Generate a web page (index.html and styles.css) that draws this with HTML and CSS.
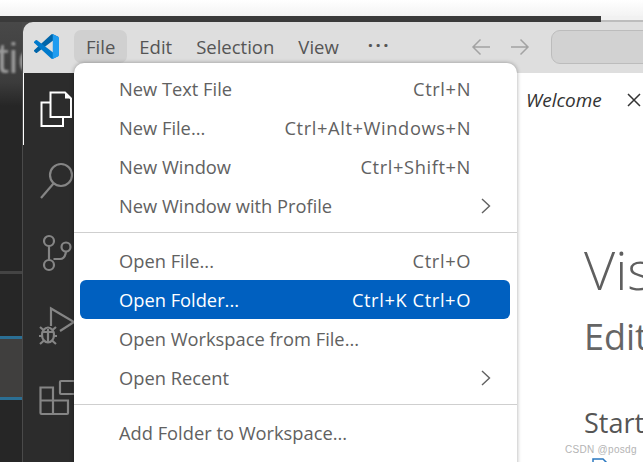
FILE: index.html
```
<!DOCTYPE html>
<html lang="en">
<head>
<meta charset="utf-8">
<title>File menu</title>
<link rel="stylesheet" href="styles.css">
</head>
<body>
<div class="desktop">
  <div class="top-glow"></div>
  <div class="top-bar"></div>
  <div class="stage">
    <div class="backdrop">
      <span class="backdrop-text">tic</span>
      <div class="backdrop-line"></div>
      <div class="backdrop-glow"></div>
    </div>
    <div class="window">
      <header class="titlebar">
        <svg class="logo" viewBox="0 0 100 100" width="25" height="25" aria-hidden="true">
          <path fill="#0065a9" d="M96.460 10.800 75.860.870a6.230 6.230 0 0 0-7.100 1.200L1.300 63.600a4.170 4.170 0 0 0 0 6.160l5.510 5.010a4.170 4.170 0 0 0 5.320.24L93.340 13.400c2.720-2.070 6.630-.13 6.630 3.290v-.24a6.250 6.250 0 0 0-3.510-5.650z"/>
          <path fill="#007acc" d="M96.460 89.200 75.860 99.130a6.230 6.230 0 0 1-7.100-1.200L1.300 36.400a4.170 4.170 0 0 1 0-6.160l5.510-5.010a4.170 4.170 0 0 1 5.320-.24l81.210 61.610c2.720 2.070 6.630.13 6.630-3.290v.24a6.250 6.250 0 0 1-3.510 5.650z"/>
          <path fill="#1f9cf0" d="M75.860 99.140a6.230 6.230 0 0 1-7.100-1.210c2.310 2.310 6.250.67 6.250-2.580V4.650c0-3.260-3.940-4.890-6.250-2.580a6.230 6.230 0 0 1 7.100-1.210l20.600 9.900A6.250 6.250 0 0 1 100 16.390v67.220a6.250 6.250 0 0 1-3.540 5.630z"/>
        </svg>
        <nav class="menubar">
          <span class="menubar-item is-open">File</span>
          <span class="menubar-item">Edit</span>
          <span class="menubar-item">Selection</span>
          <span class="menubar-item">View</span>
          <span class="menubar-item menubar-more">···</span>
        </nav>
        <svg class="nav-arrow" viewBox="0 0 20 20" width="20" height="20" aria-hidden="true"><path d="M19 10H2M9.500 2.500 2 10l7.500 7.500"/></svg>
        <svg class="nav-arrow" viewBox="0 0 20 20" width="20" height="20" aria-hidden="true"><path d="M1 10h17M10.500 2.500 18 10l-7.500 7.500"/></svg>
        <div class="search"></div>
      </header>
      <div class="workbench">
        <aside class="activity">
          <svg class="act" viewBox="0 0 36 36" width="36" height="36" aria-hidden="true">
            <path class="files-line" d="M11 11.500H2.500V35H24v-9"/>
            <path class="files-line" d="M11.500 1.500H26l6 6v18.500H11.500z"/>
            <path class="files-fold" d="M26 2l5.500 5.500H26z"/>
          </svg>
          <svg class="act" viewBox="0 0 36 36" width="36" height="36" aria-hidden="true">
            <circle class="act-line" cx="22" cy="12" r="11"/><path class="act-line" d="M14.500 20.500 2 35"/>
          </svg>
          <svg class="act" viewBox="0 0 36 36" width="36" height="36" aria-hidden="true">
            <circle class="act-line" cx="10" cy="6" r="5"/><circle class="act-line" cx="10" cy="30" r="5"/><circle class="act-line" cx="27" cy="12" r="4.500"/><path class="act-line" d="M10 11v14M14.500 24H21q5 0 6-7.500"/>
          </svg>
          <svg class="act" viewBox="0 0 36 37" width="36" height="37" aria-hidden="true">
            <path class="act-line" d="M12 19V1.500L35 15l-14 9"/>
            <ellipse class="act-line" cx="9" cy="28" rx="6" ry="7.500"/>
            <path class="act-line" d="M3 25h12M9 22v14M1 20l4 3.500M17 20l-4 3.500M0 29h3M15 29h3M1 37l4-3.500M17 37l-4-3.500"/>
          </svg>
          <svg class="act" viewBox="0 0 36 36" width="36" height="36" aria-hidden="true">
            <path class="act-line" d="M1.500 7.500H14V34H2.500q-1 0-1-1zM1.500 20.500H29V33q0 1-1 1H14"/>
            <rect class="act-line" x="21" y="1" width="15" height="13" rx="1"/>
          </svg>
        </aside>
        <main class="editor">
          <div class="tab"><em>Welcome</em><svg class="tab-close" viewBox="0 0 14 14" width="14" height="14" aria-hidden="true"><path d="M1 1l12 12M13 1 1 13"/></svg></div>
          <div class="welcome">
            <h1 class="title">Visual Studio Code</h1>
            <p class="subtitle">Editing evolved</p>
            <h2 class="start">Start</h2>
            <svg class="start-icon" viewBox="0 0 16 16" width="16" height="16" aria-hidden="true"><path d="M1 15V1h10l4 4v10"/></svg>
          </div>
        </main>
      </div>
    </div>
  </div>
  <div class="menu">
    <div class="row"><span>New Text File</span><kbd>Ctrl+N</kbd></div>
    <div class="row"><span>New File...</span><kbd>Ctrl+Alt+Windows+N</kbd></div>
    <div class="row"><span>New Window</span><kbd>Ctrl+Shift+N</kbd></div>
    <div class="row"><span>New Window with Profile</span><svg class="chev" viewBox="0 0 10 16" width="10" height="16" aria-hidden="true"><path d="M1 1l7.500 7L1 15"/></svg></div>
    <hr class="sep">
    <div class="row"><span>Open File...</span><kbd>Ctrl+O</kbd></div>
    <div class="row is-active"><span>Open Folder...</span><kbd>Ctrl+K Ctrl+O</kbd></div>
    <div class="row"><span>Open Workspace from File...</span></div>
    <div class="row"><span>Open Recent</span><svg class="chev" viewBox="0 0 10 16" width="10" height="16" aria-hidden="true"><path d="M1 1l7.500 7L1 15"/></svg></div>
    <hr class="sep">
    <div class="row"><span>Add Folder to Workspace...</span></div>
  </div>
  <span class="watermark">CSDN @posdg</span>
</div>
</body>
</html>
```
FILE: styles.css
```
* { box-sizing: border-box; }
html, body { margin: 0; height: 100%; }
body {
  font-family: "Open Sans", "Noto Sans", "Liberation Sans", sans-serif;
  background: #fff;
  overflow: hidden;
}
.desktop {
  position: relative;
  width: 643px;
  height: 462px;
  overflow: hidden;
  display: flex;
  flex-direction: column;
}
.top-glow {
  height: 16px;
  flex: none;
  background: linear-gradient(#fff, #f3f3f3);
}
.top-bar {
  height: 6px;
  flex: none;
  background:
    linear-gradient(#3a3a3a, #3a3a3a) no-repeat 0 0 / 601px 6px,
    linear-gradient(#f1f1f1 4px, #bdbdbd 4px);
}
.stage {
  flex: 1;
  display: flex;
  min-height: 0;
  background: #4a4a4a;
}
.backdrop {
  width: 23px;
  flex: none;
  position: relative;
  overflow: hidden;
  background: linear-gradient(#484848 0, #3c3c3c 60px, #262626 84px);
  border-right: 1px solid #4a4a4a;
}
.backdrop-text {
  position: absolute;
  left: -3px;
  top: 12px;
  color: #9a9a9a;
  font-size: 42px;
  line-height: 50px;
  font-family: "Liberation Sans", sans-serif;
  filter: blur(1.200px);
}
.backdrop-line {
  position: absolute;
  left: 0;
  right: 0;
  top: 249px;
  height: 3px;
  background: #444;
}
.backdrop-glow {
  position: absolute;
  left: 0;
  right: 0;
  top: 314px;
  height: 64px;
  background: #403f3e;
  border-top: 3px solid #2b6f94;
  border-bottom: 3px solid #2b6f94;
  filter: blur(.6px);
}
.window {
  flex: 1;
  min-width: 0;
  display: flex;
  flex-direction: column;
  border-top-left-radius: 10px;
  overflow: hidden;
}
.titlebar {
  height: 51px;
  flex: none;
  display: flex;
  align-items: center;
  background: #dedede;
  padding: 0 0 2px 11px;
}
.logo { flex: none; }
.menubar {
  display: flex;
  align-items: center;
  margin-left: 15px;
  font-size: 18.500px;
  color: #555;
}
.menubar-item {
  height: 33px;
  line-height: 33px;
  padding: 0 12px;
  border-radius: 7px;
  white-space: nowrap;
}
.menubar-item.is-open { background: #d0d0d0; }
.menubar-more {
  font-weight: 700;
  letter-spacing: 2.500px;
  margin: -5px 0 0 7px;
  padding: 0 10px;
}
.nav-arrow {
  flex: none;
  fill: none;
  stroke: #a3a3a3;
  stroke-width: 1.500;
  margin-left: 70px;
}
.nav-arrow + .nav-arrow { margin-left: 19px; }
.search {
  width: 140px;
  flex: none;
  height: 34px;
  margin-left: 21px;
  border: 1px solid #bcbcbc;
  border-radius: 9px;
  background: #d2d2d2;
}
.workbench {
  flex: 1;
  display: flex;
  min-height: 0;
}
.activity {
  width: 51px;
  flex: none;
  background: #2c2c2c;
  position: relative;
  display: flex;
  flex-direction: column;
  align-items: flex-start;
  gap: 36px;
  padding: 18px 0 0 16px;
}
.activity::before {
  content: "";
  position: absolute;
  left: 0;
  top: 0;
  width: 1px;
  height: 72px;
  background: #fff;
}
.act { flex: none; overflow: visible; }
.act-line { fill: none; stroke: #858585; stroke-width: 2.200; }
.files-line { fill: #2c2c2c; stroke: #fff; stroke-width: 2; }
.files-fold { fill: #fff; }
.editor {
  flex: 1;
  min-width: 0;
  background: #fff;
  color: #616161;
  padding-left: 452px;
  white-space: nowrap;
  overflow: hidden;
}
.tab {
  display: flex;
  align-items: center;
  height: 54px;
  color: #333;
  font-size: 19px;
  gap: 25px;
}
.tab-close { flex: none; fill: none; stroke: #333; stroke-width: 1.500; }
.welcome { padding-left: 58px; }
.title {
  margin: 104px 0 0;
  font-size: 54px;
  font-weight: 300;
  line-height: 76px;
  color: #5f5f5f;
}
.subtitle {
  margin: 5px 0 0;
  font-size: 36px;
  line-height: 50px;
  color: #656565;
}
.start {
  margin: 41.500px 0 0;
  font-size: 27px;
  font-weight: 400;
  line-height: 38px;
  color: #555;
}
.start-icon {
  display: block;
  margin: 16.500px 0 0 8px;
  fill: none;
  stroke: #2a78c0;
  stroke-width: 1.500;
}
.menu {
  position: absolute;
  left: 74px;
  top: 63px;
  width: 443px;
  height: 420px;
  background: #fff;
  border-radius: 10px 10px 0 0;
  box-shadow: 0 0 4px rgba(0, 0, 0, .35);
  padding: 6px 7px 6px 6px;
  font-size: 18.300px;
  color: #616161;
}
.row {
  height: 39px;
  display: flex;
  align-items: center;
  justify-content: space-between;
  padding: 0 39px;
  border-radius: 6px;
  position: relative;
  white-space: nowrap;
}
.row kbd { font: inherit; letter-spacing: .6px; }
.row.is-active { background: #0060c0; color: #fff; }
.chev {
  position: absolute;
  right: 19px;
  top: 12px;
  fill: none;
  stroke: #616161;
  stroke-width: 1.400;
}
.sep {
  height: 1px;
  margin: 7px -7px 8px -6px;
  border: 0;
  background: #cfcfcf;
}
.watermark {
  position: absolute;
  left: 565px;
  top: 444px;
  font-size: 10px;
  color: #b4b4b4;
  font-family: "Liberation Sans", sans-serif;
  letter-spacing: .3px;
}
```
